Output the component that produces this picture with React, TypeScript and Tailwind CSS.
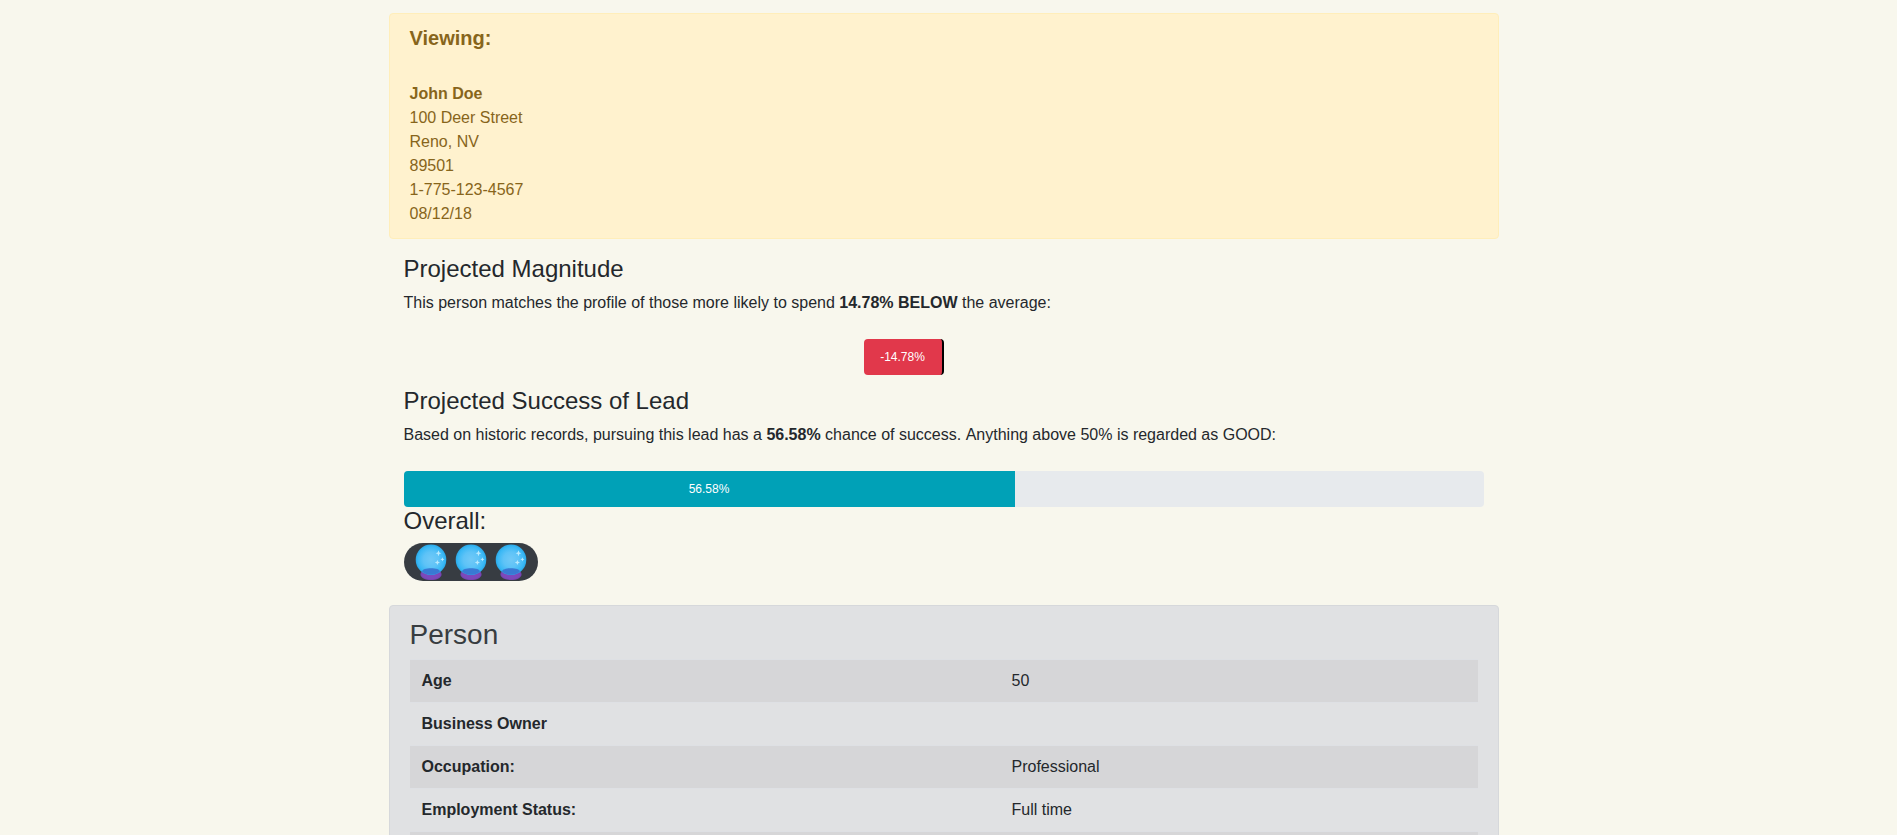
const personRows = [
  { label: 'Age', value: '50' },
  { label: 'Business Owner', value: '' },
  { label: 'Occupation:', value: 'Professional' },
  { label: 'Employment Status:', value: 'Full time' },
  { label: '', value: '' },
];

function CrystalBall({ id }: { id: string }) {
  const ball = `${id}-ball`;
  const base = `${id}-base`;
  return (
    <svg viewBox="0 0 32 38" className="h-[38px] w-8 shrink-0" aria-hidden="true">
      <defs>
        <radialGradient id={ball}>
          <stop offset="0" stopColor="#70c9f7" />
          <stop offset="0.5" stopColor="#5ec3f7" />
          <stop offset="0.85" stopColor="#3ab8f5" />
          <stop offset="1" stopColor="#2aa9e8" />
        </radialGradient>
        <radialGradient id={base}>
          <stop offset="0" stopColor="#7b4bc0" />
          <stop offset="0.8" stopColor="#7c48ba" />
          <stop offset="1" stopColor="#7441ae" />
        </radialGradient>
      </defs>
      <path d="M7 28C9 25.5 23 25.5 25 28C27.5 31 27 33.5 23.5 35.4C19.5 37.4 12.5 37.4 8.5 35.4C5 33.5 4.5 31 7 28Z" fill={`url(#${base})`} />
      <circle cx="16" cy="16.7" r="15.3" fill={`url(#${ball})`} />
      <path d="M7.2 28.8C6.4 24.2 25.6 24.2 24.8 28.8C20.5 32.8 11.5 32.8 7.2 28.8Z" fill="#3979d3" />
      <g fill="#bae9fd">
        <path d="M23.5 7.2L24.4 9.4L26.4 10.2L24.4 11L23.5 13.2L22.6 11L20.6 10.2L22.6 9.4Z" />
        <path d="M27.4 14.2L28 15.8L29.5 16.4L28 17L27.4 18.6L26.8 17L25.3 16.4L26.8 15.8Z" />
        <path d="M22.4 17.1L23.2 18.8L25 19.5L23.2 20.2L22.4 21.9L21.6 20.2L19.8 19.5L21.6 18.8Z" />
      </g>
    </svg>
  );
}

export default function App() {
  return (
    <div className="h-screen overflow-hidden bg-[#f8f7ed] pl-[388.5px] pt-[13px] font-['Liberation_Sans',Arial,sans-serif] text-base leading-6 text-[#24282c]">
      <main className="w-[1110px]">
        <section className="rounded border border-[#ffeeba] bg-[#fff2ce] px-5 py-3 text-[#87651b]">
          <h5 className="mb-8 text-xl leading-6 font-bold">Viewing:</h5>
          <address className="not-italic">
            <strong className="block">John Doe</strong>
            <div>100 Deer Street</div>
            <div>Reno, NV</div>
            <div>89501</div>
            <div>1-775-123-4567</div>
            <div>08/12/18</div>
          </address>
        </section>

        <div className="px-[15px] pt-4">
          <section className="h-[132px]">
            <h4 className="mb-[7.2px] text-2xl leading-[28.8px]">Projected Magnitude</h4>
            <p>
              This person matches the profile of those more likely to spend <b>14.78% BELOW</b> the average:
            </p>
            <div className="mt-6 flex h-9 w-1/2 justify-end">
              <div className="flex w-20 items-center justify-center rounded border-r-2 border-black bg-[#e1384b] text-xs text-white">
                -14.78%
              </div>
            </div>
          </section>

          <section className="h-[120px]">
            <h4 className="mb-[7.2px] text-2xl leading-[28.8px]">Projected Success of Lead</h4>
            <p>
              Based on historic records, pursuing this lead has a <b>56.58%</b> chance of success.{' '}
              <span className="pl-[0.05px]">Anything above 50% is regarded as GOOD:</span>
            </p>
            <div className="mt-6 flex h-9 overflow-hidden rounded bg-[#e7eaed]">
              <div className="flex w-[56.58%] items-center justify-center bg-[#00a1b7] text-xs text-white">56.58%</div>
            </div>
          </section>

          <section className="h-[98px]">
            <h4 className="mb-[7.2px] text-2xl leading-[28.8px]">Overall:</h4>
            <div className="flex h-[38px] w-[134px] justify-center gap-2 rounded-full bg-[#373c42] pl-px">
              <CrystalBall id="first" />
              <CrystalBall id="second" />
              <CrystalBall id="third" />
            </div>
          </section>
        </div>

        <section className="rounded border border-[#d6d8db] bg-[#e0e1e3] px-5 py-3">
          <h3 className="mb-[7.4px] text-[28px] leading-[33.6px] text-[#383d41]">Person</h3>
          <dl>
            {personRows.map((row, index) => (
              <div key={index} className="group">
                <div className="grid h-[43px] grid-cols-[590px_1fr] border-t border-[#dee0e4] group-odd:bg-[#d6d6d8]">
                  <dt className="px-3 py-[9px] font-bold">{row.label}</dt>
                  <dd className="px-3 py-[9px]">{row.value}</dd>
                </div>
              </div>
            ))}
          </dl>
        </section>
      </main>
    </div>
  );
}
